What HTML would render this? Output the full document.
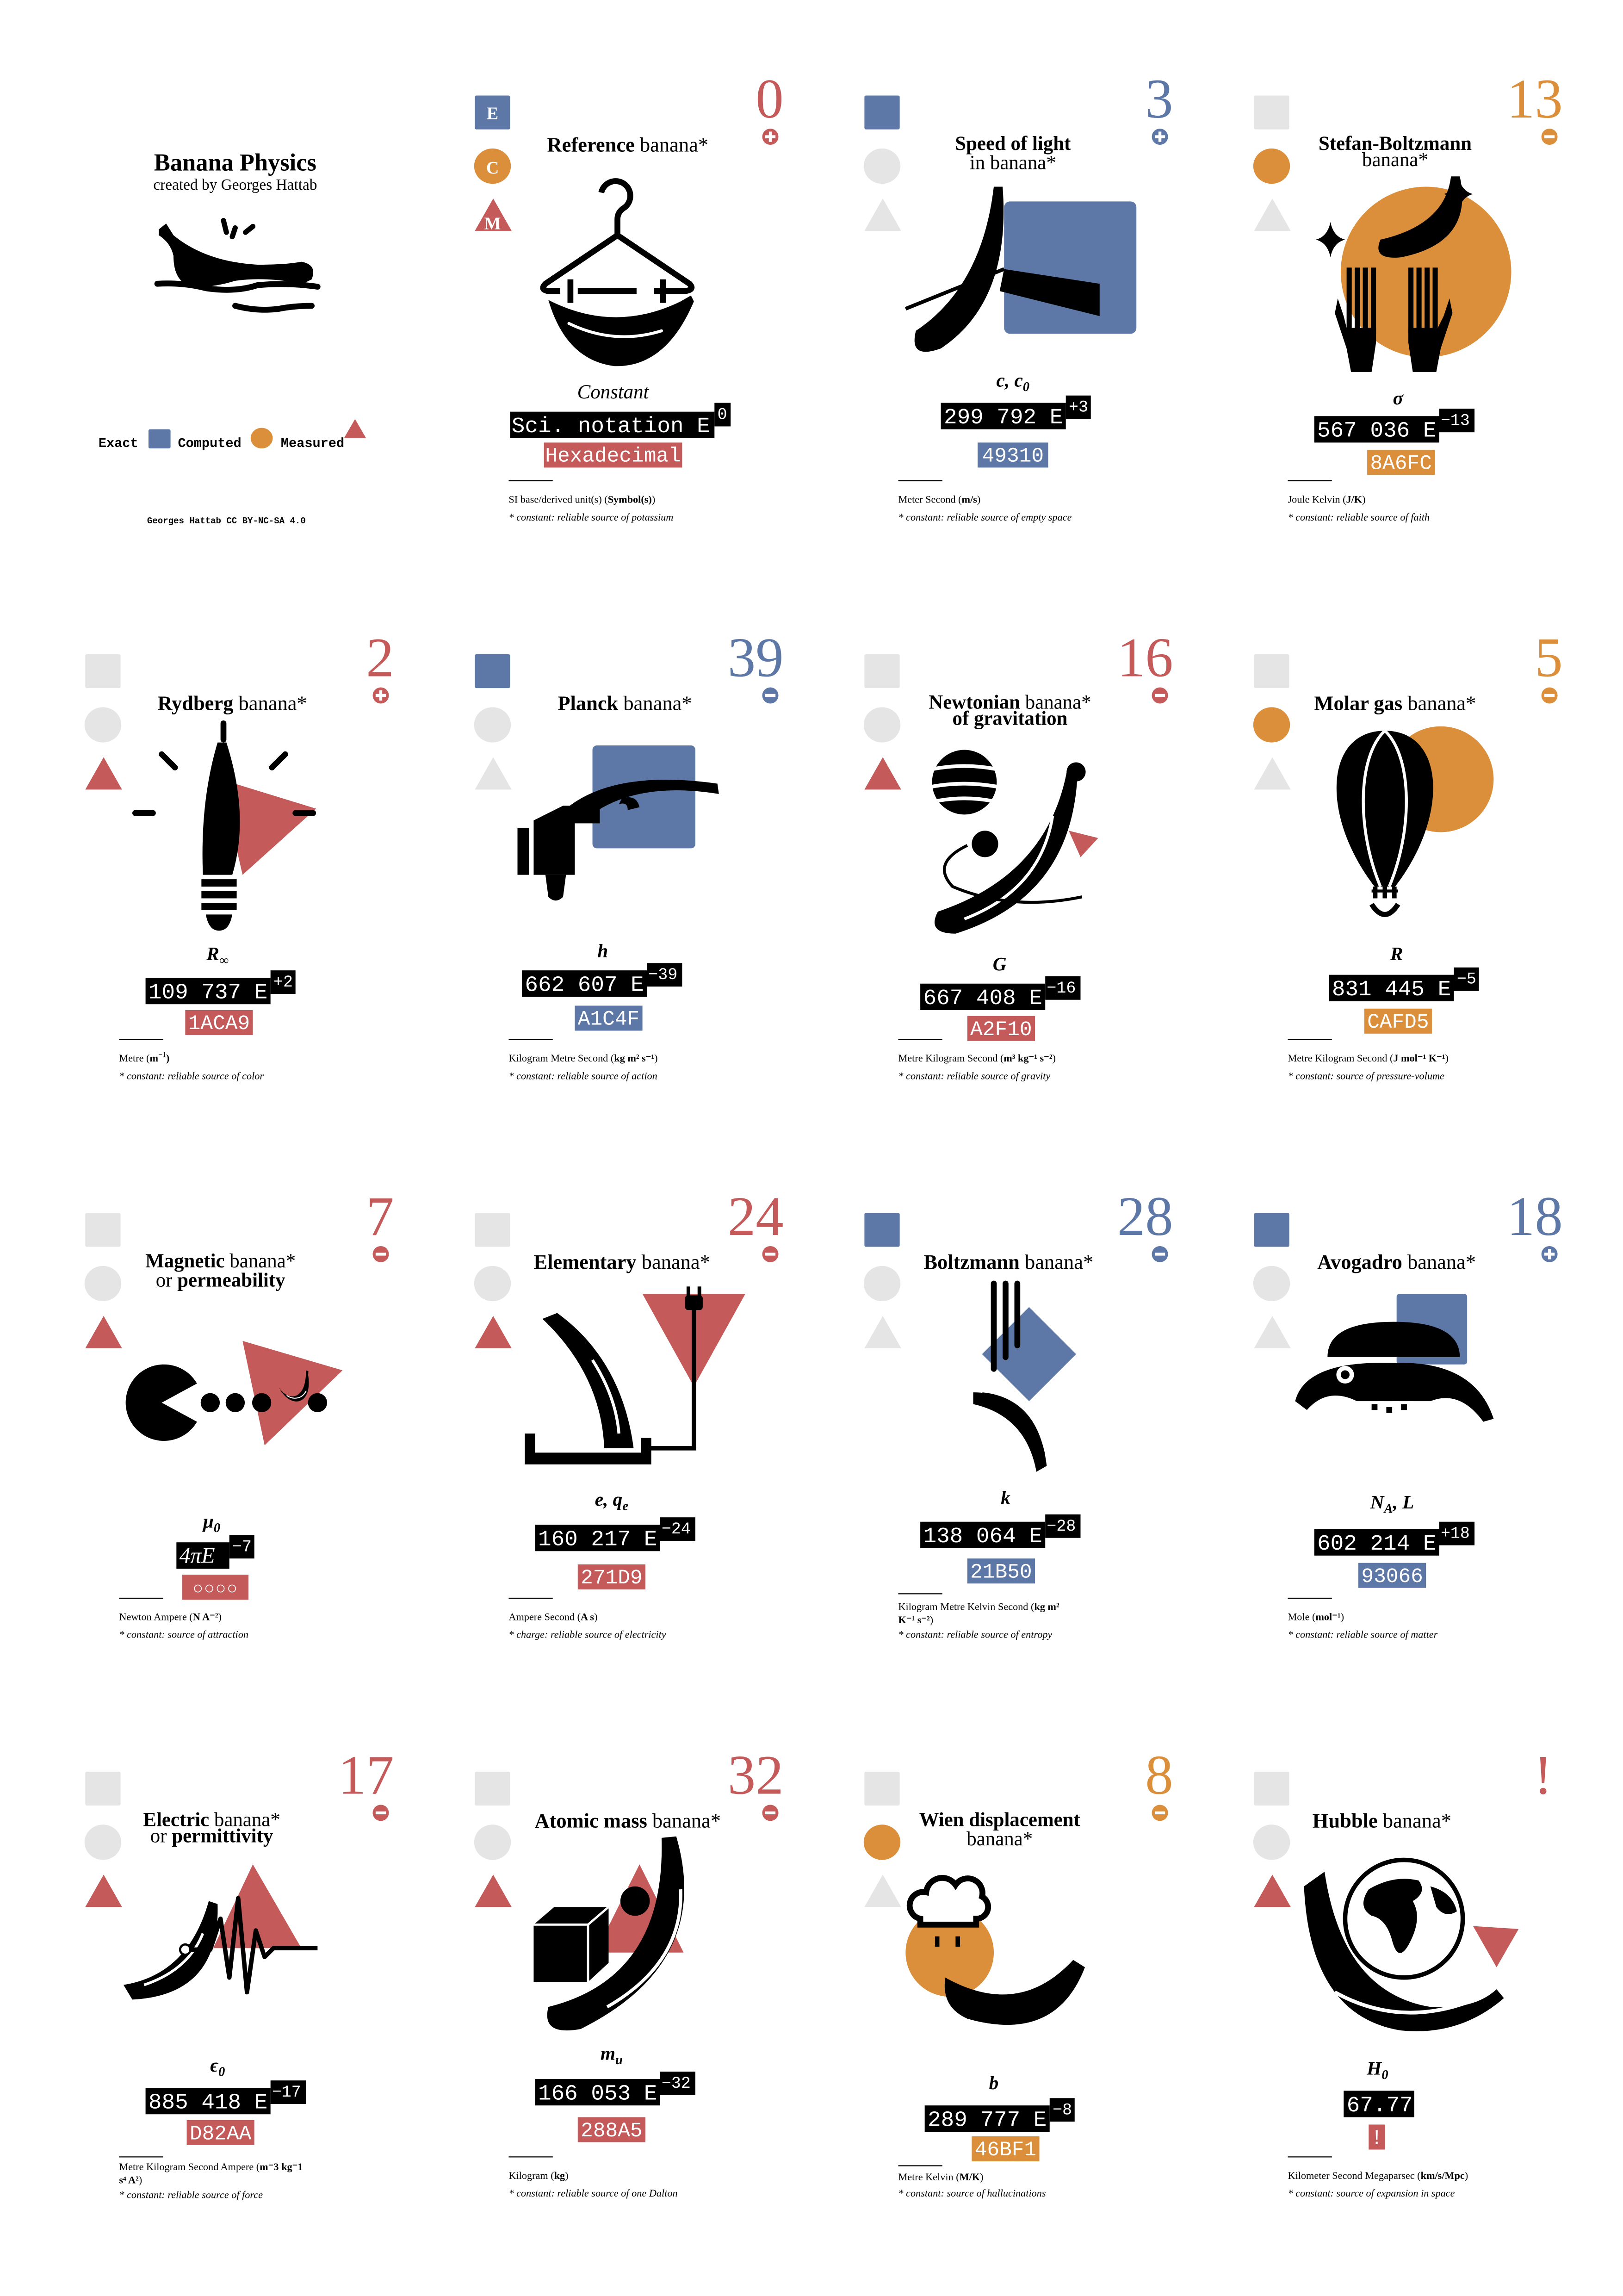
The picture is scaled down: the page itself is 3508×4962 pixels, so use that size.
<!DOCTYPE html>
<html><head><meta charset="utf-8"><style>
html,body{margin:0;padding:0;background:#fff}
svg{display:block}
.s{font-family:"Liberation Serif",serif}
.m{font-family:"Liberation Mono",monospace}
</style></head><body>
<svg width="3508" height="4962" viewBox="0 0 1104 1561.6" xmlns="http://www.w3.org/2000/svg">
<defs>
<g id="ban"><path d="M0,22 C10,70 60,90 92,14 L97,2 L103,6 L98,18 C80,110 10,100 0,22 Z" fill="#000"/><path d="M15,55 C30,75 55,80 75,62" stroke="#fff" stroke-width="3" fill="none" stroke-linecap="round"/></g>
<path id="star" d="M0,-12 Q2,-2 10,0 Q2,2 0,12 Q-2,2 -10,0 Q-2,-2 0,-12Z" fill="#000"/>
</defs>
<rect width="1104" height="1561.6" fill="#fff"/>

<!-- Title card -->
<g class="s" text-anchor="middle">
<text x="160" y="116" font-size="16.5" font-weight="bold">Banana Physics</text>
<text x="160" y="129" font-size="10.5">created by Georges Hattab</text>
</g>
<g>
<path d="M108,156 L113,152 L118,160 Q140,178 175,180 Q195,180 205,178 Q216,180 212,190 L206,193 Q180,188 160,191 Q140,197 128,194 Q118,190 118,174 Q116,165 108,160Z" fill="#000"/>
<path d="M107,193 Q125,192 140,196 Q160,199 175,194 Q195,192 216,195" stroke="#000" stroke-width="4" fill="none" stroke-linecap="round"/>
<path d="M160,208 Q175,212 190,210 Q200,208 212,208" stroke="#000" stroke-width="4" fill="none" stroke-linecap="round"/>
<path d="M152,150 L154,158 M160,155 L158,161 M167,158 L172,154" stroke="#000" stroke-width="3.5" stroke-linecap="round"/>
</g>
<g class="m" font-size="9" font-weight="bold">
<text x="67" y="304">Exact</text>
<rect x="101" y="292" width="15" height="13" fill="#5d78a6" rx="1"/>
<text x="121" y="304">Computed</text>
<ellipse cx="178" cy="298" rx="7.5" ry="7" fill="#db8f3a"/>
<text x="191" y="304">Measured</text>
<path d="M234,298 L249,298 L241.5,285Z" fill="#c45a5a"/>
<text x="154" y="356" font-size="6" text-anchor="middle">Georges Hattab CC BY-NC-SA 4.0</text>
</g>

<!-- ===== Card (1,0) Reference ===== -->
<g transform="translate(323,65)">
<rect x="0" y="0" width="24" height="23" rx="1" fill="#5d78a6"/>
<ellipse cx="12" cy="48" rx="12.5" ry="12" fill="#db8f3a"/>
<path d="M0,92 L12.5,70 L25,92Z" fill="#c45a5a"/>
<g class="s" font-size="12" font-weight="bold" fill="#fff" text-anchor="middle"><text x="12" y="16">E</text><text x="12" y="53">C</text><text x="12" y="91">M</text></g>
<text class="s" x="210" y="15" font-size="38" text-anchor="end" fill="#c45a5a">0</text>
<circle cx="201" cy="28" r="5.5" fill="#c45a5a"/><rect x="197.5" y="27" width="7" height="2" fill="#fff"/><rect x="200" y="24.5" width="2" height="7" fill="#fff"/>
<text class="s" x="104" y="38" font-size="14" text-anchor="middle"><tspan font-weight="bold">Reference</tspan> banana*</text>
<path d="M86,66 A10,10 0 1 1 102,76 Q97,79 97,84 L97,95" stroke="#000" stroke-width="4" fill="none"/>
<path d="M97,95 L48,128 Q44,132 50,133 L58,133 M70,133 L110,133 M122,133 L143,133 Q150,132 146,128 L97,95" stroke="#000" stroke-width="4" fill="none" stroke-linejoin="round"/>
<rect x="63" y="125" width="4" height="16" fill="#000"/><rect x="126" y="125" width="4" height="16" fill="#000"/>
<path d="M50,139 Q95,162 140,140 L147,136 L149,140 Q130,185 95,184 Q62,180 50,139 Z" fill="#000"/>
<path d="M64,155 Q95,170 127,160" stroke="#fff" stroke-width="2" fill="none" stroke-linecap="round"/>
<text class="s" x="94" y="206" font-size="13.5" font-style="italic" text-anchor="middle">Constant</text>
<rect x="24" y="215" width="139" height="18" fill="#000"/><text class="m" x="25" y="229" font-size="15" fill="#fff">Sci. notation E</text>
<rect x="163" y="209" width="11" height="16" fill="#000"/><text class="m" x="165" y="220" font-size="11" fill="#fff">0</text>
<rect x="47" y="236" width="94" height="17" fill="#c45a5a"/><text class="m" x="94" y="249" font-size="14" fill="#fff" text-anchor="middle">Hexadecimal</text>
<line x1="23" y1="262" x2="53" y2="262" stroke="#000" stroke-width="0.7"/>
<text class="s" x="23" y="277" font-size="7">SI base/derived unit(s) (<tspan font-weight="bold">Symbol(s)</tspan>)</text>
<text class="s" x="23" y="289" font-size="7" font-style="italic">* constant: reliable source of potassium</text>
</g>

<!-- ===== Card (2,0) Speed of light ===== -->
<g transform="translate(588,65)">
<rect x="0" y="0" width="24" height="23" rx="1" fill="#5d78a6"/>
<ellipse cx="12" cy="48" rx="12.5" ry="12" fill="#e5e5e5"/>
<path d="M0,92 L12.5,70 L25,92Z" fill="#e5e5e5"/>
<text class="s" x="210" y="15" font-size="38" text-anchor="end" fill="#5d78a6">3</text>
<circle cx="201" cy="28" r="5.5" fill="#5d78a6"/><rect x="197.5" y="27" width="7" height="2" fill="#fff"/><rect x="200" y="24.5" width="2" height="7" fill="#fff"/>
<text class="s" x="101" y="37" font-size="13.5" text-anchor="middle" font-weight="bold">Speed of light</text>
<text class="s" x="101" y="50" font-size="13.5" text-anchor="middle">in banana*</text>
<rect x="95" y="72" width="90" height="90" rx="4" fill="#5d78a6"/>
<path d="M88,62 L94,62 Q100,140 52,172 Q30,180 35,160 Q80,130 88,62 Z" fill="#000"/>
<path d="M28,145 L95,118" stroke="#000" stroke-width="2.5"/>
<path d="M95,118 L160,128 L160,150 L92,133 Z" fill="#000"/>
<text class="s" x="101" y="198" font-size="13" font-style="italic" font-weight="bold" text-anchor="middle">c, c<tspan font-size="9" dy="3">0</tspan></text>
<rect x="52" y="209" width="85" height="18" fill="#000"/><text class="m" x="54" y="223" font-size="15" fill="#fff">299 792 E</text>
<rect x="137" y="204" width="17" height="16" fill="#000"/><text class="m" x="139" y="215" font-size="11" fill="#fff">+3</text>
<rect x="77" y="236" width="48" height="17" fill="#5d78a6"/><text class="m" x="101" y="249" font-size="14" fill="#fff" text-anchor="middle">49310</text>
<line x1="23" y1="262" x2="53" y2="262" stroke="#000" stroke-width="0.7"/>
<text class="s" x="23" y="277" font-size="7">Meter Second (<tspan font-weight="bold">m/s</tspan>)</text>
<text class="s" x="23" y="289" font-size="7" font-style="italic">* constant: reliable source of empty space</text>
</g>

<!-- ===== Card (3,0) Stefan-Boltzmann ===== -->
<g transform="translate(853,65)">
<rect x="0" y="0" width="24" height="23" rx="1" fill="#e5e5e5"/>
<ellipse cx="12" cy="48" rx="12.5" ry="12" fill="#db8f3a"/>
<path d="M0,92 L12.5,70 L25,92Z" fill="#e5e5e5"/>
<text class="s" x="210" y="15" font-size="38" text-anchor="end" fill="#db8f3a">13</text>
<circle cx="201" cy="28" r="5.5" fill="#db8f3a"/><rect x="197.5" y="27" width="7" height="2" fill="#fff"/>
<text class="s" x="96" y="37" font-size="13.5" text-anchor="middle" font-weight="bold">Stefan-Boltzmann</text>
<text class="s" x="96" y="48" font-size="13.5" text-anchor="middle">banana*</text>
<circle cx="117" cy="120" r="58" fill="#db8f3a"/>
<path d="M134,55 L140,55 Q150,100 100,110 Q80,112 86,98 Q130,88 134,55 Z" fill="#000"/>
<use href="#star" transform="translate(52,98)"/>
<use href="#star" transform="translate(139,67)"/>
<g fill="#000">
<rect x="63" y="117" width="3.5" height="45"/><rect x="68.5" y="117" width="3.5" height="45"/><rect x="74" y="117" width="3.5" height="45"/><rect x="79.5" y="117" width="3.5" height="45"/>
<path d="M63,158 L83,158 L83,168 L80,188 L66,188 L63,172 L55,148 L57,138 L61,150 Z"/>
<rect x="105" y="117" width="3.5" height="45"/><rect x="110.5" y="117" width="3.5" height="45"/><rect x="116" y="117" width="3.5" height="45"/><rect x="121.5" y="117" width="3.5" height="45"/>
<path d="M105,158 L125,158 L129,150 L133,138 L135,148 L127,172 L124,188 L108,188 L105,168 Z"/>
</g>
<text class="s" x="98" y="210" font-size="13" font-style="italic" font-weight="bold" text-anchor="middle">σ</text>
<rect x="41" y="218" width="85" height="18" fill="#000"/><text class="m" x="43" y="232" font-size="15" fill="#fff">567 036 E</text>
<rect x="126" y="213" width="24" height="16" fill="#000"/><text class="m" x="127" y="224" font-size="11" fill="#fff">−13</text>
<rect x="77" y="241" width="46" height="17" fill="#db8f3a"/><text class="m" x="100" y="254" font-size="14" fill="#fff" text-anchor="middle">8A6FC</text>
<line x1="23" y1="262" x2="53" y2="262" stroke="#000" stroke-width="0.7"/>
<text class="s" x="23" y="277" font-size="7">Joule Kelvin (<tspan font-weight="bold">J/K</tspan>)</text>
<text class="s" x="23" y="289" font-size="7" font-style="italic">* constant: reliable source of faith</text>
</g>

<!-- ===== Card (0,1) Rydberg ===== -->
<g transform="translate(58,445)">
<rect x="0" y="0" width="24" height="23" rx="1" fill="#e5e5e5"/>
<ellipse cx="12" cy="48" rx="12.5" ry="12" fill="#e5e5e5"/>
<path d="M0,92 L12.5,70 L25,92Z" fill="#c45a5a"/>
<text class="s" x="210" y="15" font-size="38" text-anchor="end" fill="#c45a5a">2</text>
<circle cx="201" cy="28" r="5.5" fill="#c45a5a"/><rect x="197.5" y="27" width="7" height="2" fill="#fff"/><rect x="200" y="24.5" width="2" height="7" fill="#fff"/>
<text class="s" x="100" y="38" font-size="14" text-anchor="middle"><tspan font-weight="bold">Rydberg</tspan> banana*</text>
<path d="M92,85 L157,105 L107,150 Z" fill="#c45a5a"/>
<path d="M90,60 L96,60 Q112,110 100,150 L80,150 Q78,100 90,60 Z" fill="#000"/>
<g fill="#000"><rect x="79" y="153" width="24" height="5"/><rect x="79" y="161" width="24" height="5"/><rect x="79" y="169" width="24" height="5"/><path d="M82,177 L100,177 Q98,188 91,188 Q84,188 82,177Z"/></g>
<g stroke="#000" stroke-width="4" stroke-linecap="round"><line x1="94" y1="47" x2="94" y2="58"/><line x1="52" y1="68" x2="61" y2="77"/><line x1="136" y1="68" x2="127" y2="77"/><line x1="34" y1="108" x2="46" y2="108"/><line x1="143" y1="108" x2="155" y2="108"/></g>
<text class="s" x="90" y="208" font-size="13" font-style="italic" font-weight="bold" text-anchor="middle">R<tspan font-size="9" dy="3">∞</tspan></text>
<rect x="41" y="220" width="85" height="18" fill="#000"/><text class="m" x="43" y="234" font-size="15" fill="#fff">109 737 E</text>
<rect x="126" y="215" width="17" height="16" fill="#000"/><text class="m" x="128" y="226" font-size="11" fill="#fff">+2</text>
<rect x="68" y="242" width="46" height="17" fill="#c45a5a"/><text class="m" x="91" y="255" font-size="14" fill="#fff" text-anchor="middle">1ACA9</text>
<line x1="23" y1="262" x2="53" y2="262" stroke="#000" stroke-width="0.7"/>
<text class="s" x="23" y="277" font-size="7">Metre (<tspan font-weight="bold">m<tspan font-size="5" dy="-3">−1</tspan><tspan dy="3">)</tspan></tspan></text>
<text class="s" x="23" y="289" font-size="7" font-style="italic">* constant: reliable source of color</text>
</g>

<!-- ===== Card (1,1) Planck ===== -->
<g transform="translate(323,445)">
<rect x="0" y="0" width="24" height="23" rx="1" fill="#5d78a6"/>
<ellipse cx="12" cy="48" rx="12.5" ry="12" fill="#e5e5e5"/>
<path d="M0,92 L12.5,70 L25,92Z" fill="#e5e5e5"/>
<text class="s" x="210" y="15" font-size="38" text-anchor="end" fill="#5d78a6">39</text>
<circle cx="201" cy="28" r="5.5" fill="#5d78a6"/><rect x="197.5" y="27" width="7" height="2" fill="#fff"/>
<text class="s" x="102" y="38" font-size="14" text-anchor="middle"><tspan font-weight="bold">Planck</tspan> banana*</text>
<rect x="80" y="62" width="70" height="70" rx="3" fill="#5d78a6"/>
<path d="M62,105 Q95,78 165,88 L166,95 Q110,86 78,110 Z" fill="#000"/>
<path d="M100,98 Q110,95 112,104 L104,106 Q104,100 98,102Z" fill="#000"/>
<g fill="#000"><rect x="29" y="118" width="8" height="32"/><path d="M40,113 L60,103 L85,103 L85,115 L68,115 L68,150 L40,150Z"/><path d="M48,150 L62,150 L60,165 Q55,170 50,165Z"/></g>
<text class="s" x="87" y="206" font-size="13" font-style="italic" font-weight="bold" text-anchor="middle">h</text>
<rect x="32" y="215" width="85" height="18" fill="#000"/><text class="m" x="34" y="229" font-size="15" fill="#fff">662 607 E</text>
<rect x="117" y="210" width="24" height="16" fill="#000"/><text class="m" x="118" y="221" font-size="11" fill="#fff">−39</text>
<rect x="68" y="239" width="46" height="17" fill="#5d78a6"/><text class="m" x="91" y="252" font-size="14" fill="#fff" text-anchor="middle">A1C4F</text>
<line x1="23" y1="262" x2="53" y2="262" stroke="#000" stroke-width="0.7"/>
<text class="s" x="23" y="277" font-size="7">Kilogram Metre Second (<tspan font-weight="bold">kg m² s⁻¹</tspan>)</text>
<text class="s" x="23" y="289" font-size="7" font-style="italic">* constant: reliable source of action</text>
</g>

<!-- ===== Card (2,1) Newtonian ===== -->
<g transform="translate(588,445)">
<rect x="0" y="0" width="24" height="23" rx="1" fill="#e5e5e5"/>
<ellipse cx="12" cy="48" rx="12.5" ry="12" fill="#e5e5e5"/>
<path d="M0,92 L12.5,70 L25,92Z" fill="#c45a5a"/>
<text class="s" x="210" y="15" font-size="38" text-anchor="end" fill="#c45a5a">16</text>
<circle cx="201" cy="28" r="5.5" fill="#c45a5a"/><rect x="197.5" y="27" width="7" height="2" fill="#fff"/>
<text class="s" x="99" y="37" font-size="13.5" text-anchor="middle"><tspan font-weight="bold">Newtonian</tspan> banana*</text>
<text class="s" x="99" y="48" font-size="13.5" text-anchor="middle" font-weight="bold">of gravitation</text>
<circle cx="68" cy="87" r="22" fill="#000"/>
<g stroke="#fff" stroke-width="2.5" fill="none"><path d="M47,78 Q68,74 89,78"/><path d="M46,90 Q68,86 90,90"/><path d="M48,100 Q68,96 88,100"/></g>
<path d="M138,78 L145,80 Q142,165 62,190 Q42,190 50,175 Q125,150 138,78 Z" fill="#000"/>
<path d="M128,110 Q120,160 68,180" stroke="#fff" stroke-width="2" fill="none"/>
<circle cx="144" cy="80" r="6.5" fill="#000"/>
<circle cx="82" cy="129" r="9" fill="#000"/>
<path d="M70,130 Q45,142 60,158 Q100,175 148,165" stroke="#000" stroke-width="2" fill="none"/>
<path d="M139,120 L159,125 L147,138 Z" fill="#c45a5a"/>
<text class="s" x="92" y="215" font-size="13" font-style="italic" font-weight="bold" text-anchor="middle">G</text>
<rect x="38" y="224" width="85" height="18" fill="#000"/><text class="m" x="40" y="238" font-size="15" fill="#fff">667 408 E</text>
<rect x="123" y="219" width="24" height="16" fill="#000"/><text class="m" x="124" y="230" font-size="11" fill="#fff">−16</text>
<rect x="70" y="246" width="46" height="17" fill="#c45a5a"/><text class="m" x="93" y="259" font-size="14" fill="#fff" text-anchor="middle">A2F10</text>
<line x1="23" y1="262" x2="53" y2="262" stroke="#000" stroke-width="0.7"/>
<text class="s" x="23" y="277" font-size="7">Metre Kilogram Second (<tspan font-weight="bold">m³ kg⁻¹ s⁻²</tspan>)</text>
<text class="s" x="23" y="289" font-size="7" font-style="italic">* constant: reliable source of gravity</text>
</g>

<!-- ===== Card (3,1) Molar gas ===== -->
<g transform="translate(853,445)">
<rect x="0" y="0" width="24" height="23" rx="1" fill="#e5e5e5"/>
<ellipse cx="12" cy="48" rx="12.5" ry="12" fill="#db8f3a"/>
<path d="M0,92 L12.5,70 L25,92Z" fill="#e5e5e5"/>
<text class="s" x="210" y="15" font-size="38" text-anchor="end" fill="#db8f3a">5</text>
<circle cx="201" cy="28" r="5.5" fill="#db8f3a"/><rect x="197.5" y="27" width="7" height="2" fill="#fff"/>
<text class="s" x="96" y="38" font-size="14" text-anchor="middle"><tspan font-weight="bold">Molar gas</tspan> banana*</text>
<circle cx="127" cy="85" r="36" fill="#db8f3a"/>
<path d="M89,52 C48,52 45,110 82,158 L96,158 C133,110 130,52 89,52Z" fill="#000"/>
<path d="M89,52 C70,70 70,120 86,158 M89,52 C108,70 108,120 92,158" stroke="#fff" stroke-width="2" fill="none"/>
<g fill="#000"><rect x="81" y="158" width="3" height="8"/><rect x="87.5" y="158" width="3" height="8"/><rect x="94" y="158" width="3" height="8"/><rect x="80" y="160" width="18" height="2"/></g>
<path d="M80,170 Q89,184 98,170" stroke="#000" stroke-width="3.5" fill="none"/>
<text class="s" x="97" y="208" font-size="13" font-style="italic" font-weight="bold" text-anchor="middle">R</text>
<rect x="51" y="218" width="85" height="18" fill="#000"/><text class="m" x="53" y="232" font-size="15" fill="#fff">831 445 E</text>
<rect x="136" y="213" width="17" height="16" fill="#000"/><text class="m" x="138" y="224" font-size="11" fill="#fff">−5</text>
<rect x="75" y="241" width="46" height="17" fill="#db8f3a"/><text class="m" x="98" y="254" font-size="14" fill="#fff" text-anchor="middle">CAFD5</text>
<line x1="23" y1="262" x2="53" y2="262" stroke="#000" stroke-width="0.7"/>
<text class="s" x="23" y="277" font-size="7">Metre Kilogram Second (<tspan font-weight="bold">J mol⁻¹ K⁻¹</tspan>)</text>
<text class="s" x="23" y="289" font-size="7" font-style="italic">* constant: source of pressure-volume</text>
</g>

<!-- ===== Card (0,2) Magnetic ===== -->
<g transform="translate(58,825)">
<rect x="0" y="0" width="24" height="23" rx="1" fill="#e5e5e5"/>
<ellipse cx="12" cy="48" rx="12.5" ry="12" fill="#e5e5e5"/>
<path d="M0,92 L12.5,70 L25,92Z" fill="#c45a5a"/>
<text class="s" x="210" y="15" font-size="38" text-anchor="end" fill="#c45a5a">7</text>
<circle cx="201" cy="28" r="5.5" fill="#c45a5a"/><rect x="197.5" y="27" width="7" height="2" fill="#fff"/>
<text class="s" x="92" y="37" font-size="13.5" text-anchor="middle"><tspan font-weight="bold">Magnetic</tspan> banana*</text>
<text class="s" x="92" y="50" font-size="13.5" text-anchor="middle">or <tspan font-weight="bold">permeability</tspan></text>
<path d="M107,87 L175,107 L122,158 Z" fill="#c45a5a"/>
<path d="M52,129 L76,116 A26,26 0 1 0 76,142 Z" fill="#000"/>
<circle cx="85" cy="129" r="6.5" fill="#000"/><circle cx="102" cy="129" r="6.5" fill="#000"/><circle cx="120" cy="129" r="6.5" fill="#000"/><circle cx="158" cy="129" r="6.5" fill="#000"/>
<use href="#ban" transform="translate(130,114) rotate(-20) scale(0.22)"/>
<text class="s" x="86" y="214" font-size="13" font-style="italic" font-weight="bold" text-anchor="middle">μ<tspan font-size="9" dy="3">0</tspan></text>
<rect x="62" y="224" width="36" height="18" fill="#000"/><text class="s" x="64" y="238" font-size="15" font-style="italic" fill="#fff">4πE</text>
<rect x="98" y="219" width="17" height="16" fill="#000"/><text class="m" x="100" y="230" font-size="11" fill="#fff">−7</text>
<rect x="66" y="246" width="45" height="17" fill="#c45a5a"/><text class="s" x="88.5" y="259" font-size="12" fill="#fff" text-anchor="middle" letter-spacing="0.5">○○○○</text>
<line x1="23" y1="262" x2="53" y2="262" stroke="#000" stroke-width="0.7"/>
<text class="s" x="23" y="277" font-size="7">Newton Ampere (<tspan font-weight="bold">N A⁻²</tspan>)</text>
<text class="s" x="23" y="289" font-size="7" font-style="italic">* constant: source of attraction</text>
</g>

<!-- ===== Card (1,2) Elementary ===== -->
<g transform="translate(323,825)">
<rect x="0" y="0" width="24" height="23" rx="1" fill="#e5e5e5"/>
<ellipse cx="12" cy="48" rx="12.5" ry="12" fill="#e5e5e5"/>
<path d="M0,92 L12.5,70 L25,92Z" fill="#c45a5a"/>
<text class="s" x="210" y="15" font-size="38" text-anchor="end" fill="#c45a5a">24</text>
<circle cx="201" cy="28" r="5.5" fill="#c45a5a"/><rect x="197.5" y="27" width="7" height="2" fill="#fff"/>
<text class="s" x="100" y="38" font-size="14" text-anchor="middle"><tspan font-weight="bold">Elementary</tspan> banana*</text>
<path d="M114,55 L184,55 L149,118 Z" fill="#c45a5a"/>
<g fill="#000"><rect x="143" y="56" width="12" height="10" rx="2"/><rect x="144" y="50" width="2.5" height="7"/><rect x="151.5" y="50" width="2.5" height="7"/></g>
<path d="M149,66 L149,160 L118,160" stroke="#000" stroke-width="3" fill="none"/>
<path d="M34,150 h7 v13 h72 v-10 h7 v18 h-86 Z" fill="#000"/>
<path d="M46,72 L56,68 Q100,100 108,160 L88,160 Q86,110 46,72 Z" fill="#000"/>
<path d="M80,100 Q96,125 98,150" stroke="#fff" stroke-width="2" fill="none"/>
<text class="s" x="93" y="199" font-size="13" font-style="italic" font-weight="bold" text-anchor="middle">e, q<tspan font-size="9" dy="3">e</tspan></text>
<rect x="41" y="212" width="85" height="18" fill="#000"/><text class="m" x="43" y="226" font-size="15" fill="#fff">160 217 E</text>
<rect x="126" y="207" width="24" height="16" fill="#000"/><text class="m" x="127" y="218" font-size="11" fill="#fff">−24</text>
<rect x="70" y="239" width="46" height="17" fill="#c45a5a"/><text class="m" x="93" y="252" font-size="14" fill="#fff" text-anchor="middle">271D9</text>
<line x1="23" y1="262" x2="53" y2="262" stroke="#000" stroke-width="0.7"/>
<text class="s" x="23" y="277" font-size="7">Ampere Second (<tspan font-weight="bold">A s</tspan>)</text>
<text class="s" x="23" y="289" font-size="7" font-style="italic">* charge: reliable source of electricity</text>
</g>

<!-- ===== Card (2,2) Boltzmann ===== -->
<g transform="translate(588,825)">
<rect x="0" y="0" width="24" height="23" rx="1" fill="#5d78a6"/>
<ellipse cx="12" cy="48" rx="12.5" ry="12" fill="#e5e5e5"/>
<path d="M0,92 L12.5,70 L25,92Z" fill="#e5e5e5"/>
<text class="s" x="210" y="15" font-size="38" text-anchor="end" fill="#5d78a6">28</text>
<circle cx="201" cy="28" r="5.5" fill="#5d78a6"/><rect x="197.5" y="27" width="7" height="2" fill="#fff"/>
<text class="s" x="98" y="38" font-size="14" text-anchor="middle"><tspan font-weight="bold">Boltzmann</tspan> banana*</text>
<path d="M112,64 L144,96 L112,128 L80,96 Z" fill="#5d78a6"/>
<g fill="#000"><rect x="86" y="46" width="4" height="62" rx="2"/><rect x="94" y="46" width="4" height="54" rx="2"/><rect x="102" y="46" width="4" height="46" rx="2"/></g>
<path d="M74,122 Q118,122 124,172 L117,176 Q110,138 74,130 Z" fill="#000"/>
<path d="M80,125 Q112,128 120,165" stroke="#000" stroke-width="6" fill="none"/>
<text class="s" x="96" y="198" font-size="13" font-style="italic" font-weight="bold" text-anchor="middle">k</text>
<rect x="38" y="210" width="85" height="18" fill="#000"/><text class="m" x="40" y="224" font-size="15" fill="#fff">138 064 E</text>
<rect x="123" y="205" width="24" height="16" fill="#000"/><text class="m" x="124" y="216" font-size="11" fill="#fff">−28</text>
<rect x="70" y="235" width="46" height="17" fill="#5d78a6"/><text class="m" x="93" y="248" font-size="14" fill="#fff" text-anchor="middle">21B50</text>
<line x1="23" y1="259" x2="53" y2="259" stroke="#000" stroke-width="0.7"/>
<text class="s" x="23" y="270" font-size="7">Kilogram Metre Kelvin Second (<tspan font-weight="bold">kg m²</tspan></text>
<text class="s" x="23" y="279" font-size="7" font-weight="bold">K⁻¹ s⁻²<tspan font-weight="normal">)</tspan></text>
<text class="s" x="23" y="289" font-size="7" font-style="italic">* constant: reliable source of entropy</text>
</g>

<!-- ===== Card (3,2) Avogadro ===== -->
<g transform="translate(853,825)">
<rect x="0" y="0" width="24" height="23" rx="1" fill="#5d78a6"/>
<ellipse cx="12" cy="48" rx="12.5" ry="12" fill="#e5e5e5"/>
<path d="M0,92 L12.5,70 L25,92Z" fill="#e5e5e5"/>
<text class="s" x="210" y="15" font-size="38" text-anchor="end" fill="#5d78a6">18</text>
<circle cx="201" cy="28" r="5.5" fill="#5d78a6"/><rect x="197.5" y="27" width="7" height="2" fill="#fff"/><rect x="200" y="24.5" width="2" height="7" fill="#fff"/>
<text class="s" x="97" y="38" font-size="14" text-anchor="middle"><tspan font-weight="bold">Avogadro</tspan> banana*</text>
<rect x="97" y="55" width="48" height="48" rx="2" fill="#5d78a6"/>
<path d="M50,98 Q50,74 95,74 Q140,74 140,98 Z" fill="#000"/>
<path d="M28,128 Q35,100 95,102 Q150,100 163,140 L156,142 Q140,120 120,128 L70,128 Q50,118 36,134 Z" fill="#000"/>
<circle cx="62" cy="110" r="6" fill="#fff"/><circle cx="62" cy="110" r="3" fill="#000"/>
<g fill="#fff"><rect x="85" y="128" width="3" height="3"/><rect x="95" y="128" width="3" height="3"/><rect x="105" y="128" width="3" height="3"/></g>
<g fill="#000"><rect x="80" y="130" width="4" height="4"/><rect x="90" y="132" width="4" height="4"/><rect x="100" y="130" width="4" height="4"/></g>
<text class="s" x="94" y="201" font-size="13" font-style="italic" font-weight="bold" text-anchor="middle">N<tspan font-size="9" dy="3">A</tspan><tspan dy="-3">, L</tspan></text>
<rect x="41" y="215" width="85" height="18" fill="#000"/><text class="m" x="43" y="229" font-size="15" fill="#fff">602 214 E</text>
<rect x="126" y="210" width="24" height="16" fill="#000"/><text class="m" x="127" y="221" font-size="11" fill="#fff">+18</text>
<rect x="71" y="238" width="46" height="17" fill="#5d78a6"/><text class="m" x="94" y="251" font-size="14" fill="#fff" text-anchor="middle">93066</text>
<line x1="23" y1="262" x2="53" y2="262" stroke="#000" stroke-width="0.7"/>
<text class="s" x="23" y="277" font-size="7">Mole (<tspan font-weight="bold">mol⁻¹</tspan>)</text>
<text class="s" x="23" y="289" font-size="7" font-style="italic">* constant: reliable source of matter</text>
</g>

<!-- ===== Card (0,3) Electric ===== -->
<g transform="translate(58,1205)">
<rect x="0" y="0" width="24" height="23" rx="1" fill="#e5e5e5"/>
<ellipse cx="12" cy="48" rx="12.5" ry="12" fill="#e5e5e5"/>
<path d="M0,92 L12.5,70 L25,92Z" fill="#c45a5a"/>
<text class="s" x="210" y="15" font-size="38" text-anchor="end" fill="#c45a5a">17</text>
<circle cx="201" cy="28" r="5.5" fill="#c45a5a"/><rect x="197.5" y="27" width="7" height="2" fill="#fff"/>
<text class="s" x="86" y="37" font-size="13.5" text-anchor="middle"><tspan font-weight="bold">Electric</tspan> banana*</text>
<text class="s" x="86" y="48" font-size="13.5" text-anchor="middle">or <tspan font-weight="bold">permittivity</tspan></text>
<path d="M87,120 L147,120 L114,63 Z" fill="#c45a5a"/>
<path d="M26,145 Q70,138 84,88 L90,90 Q92,152 32,155 Z" fill="#000"/>
<path d="M40,145 Q70,135 80,110" stroke="#fff" stroke-width="1.8" fill="none"/>
<polyline points="68,121 85,121 92,100 98,140 104,86 110,150 116,108 122,126 128,120 158,120" stroke="#000" stroke-width="3" fill="none" stroke-linejoin="round"/>
<circle cx="68" cy="121" r="3.5" fill="#fff" stroke="#000" stroke-width="1.5"/>
<text class="s" x="90" y="204" font-size="13" font-style="italic" font-weight="bold" text-anchor="middle">ϵ<tspan font-size="9" dy="3">0</tspan></text>
<rect x="41" y="215" width="85" height="18" fill="#000"/><text class="m" x="43" y="229" font-size="15" fill="#fff">885 418 E</text>
<rect x="126" y="210" width="24" height="16" fill="#000"/><text class="m" x="127" y="221" font-size="11" fill="#fff">−17</text>
<rect x="69" y="237" width="46" height="17" fill="#c45a5a"/><text class="m" x="92" y="250" font-size="14" fill="#fff" text-anchor="middle">D82AA</text>
<line x1="23" y1="262" x2="53" y2="262" stroke="#000" stroke-width="0.7"/>
<text class="s" x="23" y="271" font-size="7">Metre Kilogram Second Ampere (<tspan font-weight="bold">m⁻3 kg⁻1</tspan></text>
<text class="s" x="23" y="280" font-size="7" font-weight="bold">s⁴ A²<tspan font-weight="normal">)</tspan></text>
<text class="s" x="23" y="290" font-size="7" font-style="italic">* constant: reliable source of force</text>
</g>

<!-- ===== Card (1,3) Atomic mass ===== -->
<g transform="translate(323,1205)">
<rect x="0" y="0" width="24" height="23" rx="1" fill="#e5e5e5"/>
<ellipse cx="12" cy="48" rx="12.5" ry="12" fill="#e5e5e5"/>
<path d="M0,92 L12.5,70 L25,92Z" fill="#c45a5a"/>
<text class="s" x="210" y="15" font-size="38" text-anchor="end" fill="#c45a5a">32</text>
<circle cx="201" cy="28" r="5.5" fill="#c45a5a"/><rect x="197.5" y="27" width="7" height="2" fill="#fff"/>
<text class="s" x="104" y="38" font-size="14" text-anchor="middle"><tspan font-weight="bold">Atomic mass</tspan> banana*</text>
<path d="M82,123 L142,123 L112,63 Z" fill="#c45a5a"/>
<path d="M127,45 L137,44 Q162,130 72,175 Q45,180 50,160 Q130,140 127,45 Z" fill="#000"/>
<path d="M140,80 Q142,130 90,160" stroke="#fff" stroke-width="2.2" fill="none"/>
<circle cx="109" cy="88" r="10" fill="#000"/>
<path d="M40,104 L54,92 L91,92 L91,130 L77,143 L40,143 Z" fill="#000"/>
<path d="M40,104 L77,104 L91,92 M77,104 L77,143" stroke="#fff" stroke-width="1.5" fill="none"/>
<text class="s" x="93" y="196" font-size="13" font-style="italic" font-weight="bold" text-anchor="middle">m<tspan font-size="9" dy="3">u</tspan></text>
<rect x="41" y="209" width="85" height="18" fill="#000"/><text class="m" x="43" y="223" font-size="15" fill="#fff">166 053 E</text>
<rect x="126" y="204" width="24" height="16" fill="#000"/><text class="m" x="127" y="215" font-size="11" fill="#fff">−32</text>
<rect x="70" y="235" width="46" height="17" fill="#c45a5a"/><text class="m" x="93" y="248" font-size="14" fill="#fff" text-anchor="middle">288A5</text>
<line x1="23" y1="262" x2="53" y2="262" stroke="#000" stroke-width="0.7"/>
<text class="s" x="23" y="277" font-size="7">Kilogram (<tspan font-weight="bold">kg</tspan>)</text>
<text class="s" x="23" y="289" font-size="7" font-style="italic">* constant: reliable source of one Dalton</text>
</g>

<!-- ===== Card (2,3) Wien ===== -->
<g transform="translate(588,1205)">
<rect x="0" y="0" width="24" height="23" rx="1" fill="#e5e5e5"/>
<ellipse cx="12" cy="48" rx="12.5" ry="12" fill="#db8f3a"/>
<path d="M0,92 L12.5,70 L25,92Z" fill="#e5e5e5"/>
<text class="s" x="210" y="15" font-size="38" text-anchor="end" fill="#db8f3a">8</text>
<circle cx="201" cy="28" r="5.5" fill="#db8f3a"/><rect x="197.5" y="27" width="7" height="2" fill="#fff"/>
<text class="s" x="92" y="37" font-size="13.5" text-anchor="middle" font-weight="bold">Wien displacement</text>
<text class="s" x="92" y="50" font-size="13.5" text-anchor="middle">banana*</text>
<circle cx="58" cy="123" r="30" fill="#db8f3a"/>
<path d="M38,100 a9,9 0 0 1 4,-18 a11,11 0 0 1 20,-5 a10,10 0 0 1 18,8 a8,8 0 0 1 -4,15 v4 h-38 Z" fill="#fff" stroke="#000" stroke-width="4"/>
<rect x="48" y="112" width="3" height="7" fill="#000"/><rect x="62" y="112" width="3" height="7" fill="#000"/>
<path d="M55,140 Q105,168 142,128 L150,133 Q130,185 70,168 Q52,160 55,140 Z" fill="#000"/>
<text class="s" x="88" y="216" font-size="13" font-style="italic" font-weight="bold" text-anchor="middle">b</text>
<rect x="41" y="227" width="85" height="18" fill="#000"/><text class="m" x="43" y="241" font-size="15" fill="#fff">289 777 E</text>
<rect x="126" y="222" width="17" height="16" fill="#000"/><text class="m" x="128" y="233" font-size="11" fill="#fff">−8</text>
<rect x="73" y="248" width="46" height="17" fill="#db8f3a"/><text class="m" x="96" y="261" font-size="14" fill="#fff" text-anchor="middle">46BF1</text>
<line x1="23" y1="268" x2="53" y2="268" stroke="#000" stroke-width="0.7"/>
<text class="s" x="23" y="278" font-size="7">Metre Kelvin (<tspan font-weight="bold">M/K</tspan>)</text>
<text class="s" x="23" y="289" font-size="7" font-style="italic">* constant: source of hallucinations</text>
</g>

<!-- ===== Card (3,3) Hubble ===== -->
<g transform="translate(853,1205)">
<rect x="0" y="0" width="24" height="23" rx="1" fill="#e5e5e5"/>
<ellipse cx="12" cy="48" rx="12.5" ry="12" fill="#e5e5e5"/>
<path d="M0,92 L12.5,70 L25,92Z" fill="#c45a5a"/>
<text class="s" x="203" y="15" font-size="38" text-anchor="end" fill="#c45a5a">!</text>
<text class="s" x="87" y="38" font-size="14" text-anchor="middle"><tspan font-weight="bold">Hubble</tspan> banana*</text>
<path d="M149,105 L180,107 L165,133 Z" fill="#c45a5a"/>
<path d="M34,78 L48,68 Q60,150 120,160 Q150,162 165,148 L170,154 Q140,180 100,176 Q38,166 34,78 Z" fill="#000"/>
<circle cx="102" cy="100" r="40" fill="#fff" stroke="#000" stroke-width="3"/>
<path d="M78,80 Q95,70 112,74 Q118,82 108,88 Q115,100 105,118 Q98,130 94,115 Q90,100 80,98 Q70,92 78,80 Z" fill="#000"/>
<path d="M120,78 Q135,82 138,95 Q130,100 124,92 Z" fill="#000"/>
<path d="M55,150 Q100,175 150,155" stroke="#fff" stroke-width="2.5" fill="none"/>
<text class="s" x="84" y="206" font-size="13" font-style="italic" font-weight="bold" text-anchor="middle">H<tspan font-size="9" dy="3">0</tspan></text>
<rect x="61" y="217" width="48" height="18" fill="#000"/><text class="m" x="63" y="231" font-size="15" fill="#fff">67.77</text>
<rect x="78" y="240" width="11" height="17" fill="#c45a5a"/><text class="m" x="83.5" y="253" font-size="14" fill="#fff" text-anchor="middle">!</text>
<line x1="23" y1="262" x2="53" y2="262" stroke="#000" stroke-width="0.7"/>
<text class="s" x="23" y="277" font-size="7">Kilometer Second Megaparsec (<tspan font-weight="bold">km/s/Mpc</tspan>)</text>
<text class="s" x="23" y="289" font-size="7" font-style="italic">* constant: source of expansion in space</text>
</g>
</svg>
</body></html>
